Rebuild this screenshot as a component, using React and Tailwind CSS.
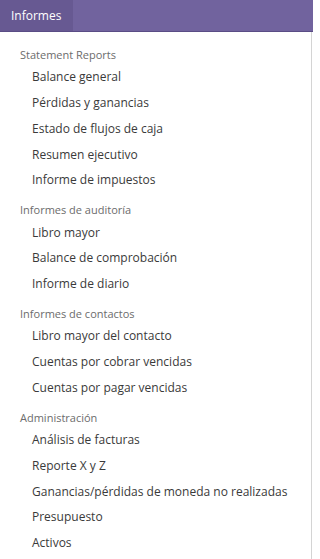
import React from 'react';

const sections = [
  {
    title: 'Statement Reports',
    items: ['Balance general', 'Pérdidas y ganancias', 'Estado de flujos de caja', 'Resumen ejecutivo', 'Informe de impuestos'],
  },
  {
    title: 'Informes de auditoría',
    items: ['Libro mayor', 'Balance de comprobación', 'Informe de diario'],
  },
  {
    title: 'Informes de contactos',
    items: ['Libro mayor del contacto', 'Cuentas por cobrar vencidas', 'Cuentas por pagar vencidas'],
  },
  {
    title: 'Administración',
    items: ['Análisis de facturas', 'Reporte X y Z', 'Ganancias/pérdidas de moneda no realizadas', 'Presupuesto', 'Activos'],
  },
];

export default function App() {
  return (
    <div className="w-[313px] h-[559px] overflow-hidden bg-white font-['Open_Sans',sans-serif]">
      <div className="flex h-[32px] bg-[#71639e] border-b border-[#5a4c85]">
        <div className="flex items-center w-[73px] pl-[11px] bg-[#675992] text-white text-[12px]">Informes</div>
      </div>
      <div className="w-[312px] border-r border-[#d4d4d4] pt-[6px] pb-4">
        {sections.map((s, i) => (
          <div key={i} className="mt-[7.5px]">
            <div className="h-[19px] flex items-center pl-[20px] text-[11px] text-[#6c6c6c]">{s.title}</div>
            {s.items.map((it, j) => (
              <div key={j} className="h-[25.75px] flex items-center pl-[32px] text-[12px] text-[#3a3a3a] whitespace-nowrap">
                {it}
              </div>
            ))}
          </div>
        ))}
      </div>
    </div>
  );
}
